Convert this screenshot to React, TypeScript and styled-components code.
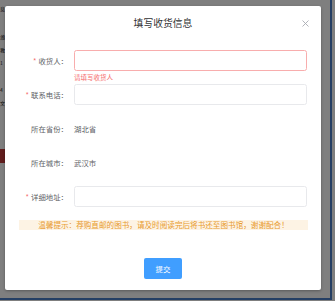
import React from "react";
import styled, { createGlobalStyle } from "styled-components";

const GlobalStyle = createGlobalStyle`
  html, body { margin: 0; padding: 0; }
  body {
    width: 335px;
    height: 301px;
    overflow: hidden;
    font-family: "Noto Sans CJK SC", "Noto Sans", sans-serif;
    background: #fff;
  }
`;

const Page = styled.div`
  position: relative;
  width: 335px;
  height: 301px;
  background: #fff;
  overflow: hidden;
`;

const BehindFrame = styled.div`
  box-sizing: border-box;
  width: 332px;
  height: 300px;
  border-right: 2px solid #4a7fc8;
  border-bottom: 2px solid #4a7fc8;
  display: flex;
  flex-direction: column;
  padding-top: 5px;
`;

const BehindLine = styled.div<{ $top: number }>`
  margin-top: ${(p) => p.$top}px;
  font-size: 5px;
  line-height: 8px;
  color: #222;
  white-space: nowrap;
`;

const BehindRed = styled.div`
  margin-top: 42px;
  width: 6px;
  height: 14px;
  background: #c23a3a;
`;

const Overlay = styled.div`
  position: absolute;
  inset: 0;
  background: rgba(0, 0, 0, 0.5);
  box-sizing: border-box;
  padding: 6px 14px 11px 5px;
  display: flex;
`;

const Modal = styled.div`
  position: relative;
  width: 316px;
  height: 284px;
  background: #fff;
  border-radius: 2px;
  box-shadow: 0 1px 3px rgba(0, 0, 0, 0.3);
  display: flex;
  flex-direction: column;
`;

const Header = styled.div`
  padding: 11px 10px 0;
  height: 13px;
`;

const Title = styled.div`
  text-align: center;
  font-size: 9.8px;
  line-height: 13px;
  color: #303133;
`;

const Close = styled.div`
  position: absolute;
  right: 12px;
  top: 14px;
  width: 7px;
  height: 7px;
  display: flex;
`;

const Body = styled.div`
  padding: 20px 14px 0 0;
  display: flex;
  flex-direction: column;
`;

const Row = styled.div`
  display: flex;
  align-items: center;
  height: 21px;
  margin-bottom: 13px;
`;

const Label = styled.div`
  box-sizing: border-box;
  width: 69px;
  padding-right: 6px;
  text-align: right;
  font-size: 7.4px;
  color: #606266;
  white-space: nowrap;
`;

const Star = styled.span`
  color: #f56c6c;
  margin-right: 2px;
`;

const Field = styled.div`
  position: relative;
  flex: 1;
  height: 21px;
  display: flex;
  align-items: center;
`;

const Input = styled.div<{ $error?: boolean }>`
  box-sizing: border-box;
  width: 100%;
  height: 21px;
  border: 1px solid ${(p) => (p.$error ? "#f8adad" : "#e8e9ec")};
  border-radius: 2.5px;
  background: #fff;
`;

const ErrorText = styled.div`
  position: absolute;
  left: 0;
  top: 100%;
  padding-top: 2.5px;
  font-size: 6.5px;
  line-height: 7px;
  color: #f56c6c;
  white-space: nowrap;
`;

const Value = styled.div`
  font-size: 7.4px;
  color: #606266;
`;

const Notice = styled.div`
  margin: 0 0 0 14px;
  height: 10px;
  width: 289px;
  background: #fdf3e4;
  color: #e89a2c;
  font-size: 7.6px;
  line-height: 10px;
  text-align: center;
  white-space: nowrap;
`;

const Footer = styled.div`
  display: flex;
  justify-content: center;
  padding-top: 28px;
`;

const SubmitButton = styled.button`
  width: 38px;
  height: 21px;
  border: none;
  border-radius: 2px;
  background: #409eff;
  color: #fff;
  font-family: "Noto Sans CJK SC", "Noto Sans", sans-serif;
  font-size: 7.4px;
  padding: 0;
`;

export default function App() {
  return (
    <>
      <GlobalStyle />
      <Page>
        <BehindFrame>
          <BehindLine $top={0}>息</BehindLine>
          <BehindLine $top={20}>瀚</BehindLine>
          <BehindLine $top={5}>教</BehindLine>
          <BehindLine $top={5}>1</BehindLine>
          <BehindLine $top={19}>4</BehindLine>
          <BehindLine $top={5}>文</BehindLine>
          <BehindRed />
        </BehindFrame>
        <Overlay>
          <Modal>
            <Header>
              <Title>填写收货信息</Title>
            </Header>
            <Close>
              <svg width="7" height="7" viewBox="0 0 7 7">
                <path d="M0.5 0.5 L6.5 6.5 M6.5 0.5 L0.5 6.5" stroke="#a8abb2" strokeWidth="0.9" />
              </svg>
            </Close>
            <Body>
              <Row>
                <Label>
                  <Star>*</Star>收货人：
                </Label>
                <Field>
                  <Input $error />
                  <ErrorText>请填写收货人</ErrorText>
                </Field>
              </Row>
              <Row>
                <Label>
                  <Star>*</Star>联系电话：
                </Label>
                <Field>
                  <Input />
                </Field>
              </Row>
              <Row>
                <Label>所在省份：</Label>
                <Field>
                  <Value>湖北省</Value>
                </Field>
              </Row>
              <Row>
                <Label>所在城市：</Label>
                <Field>
                  <Value>武汉市</Value>
                </Field>
              </Row>
              <Row>
                <Label>
                  <Star>*</Star>详细地址：
                </Label>
                <Field>
                  <Input />
                </Field>
              </Row>
            </Body>
            <Notice>温馨提示：荐购直邮的图书，请及时阅读完后将书还至图书馆，谢谢配合！</Notice>
            <Footer>
              <SubmitButton>提交</SubmitButton>
            </Footer>
          </Modal>
        </Overlay>
      </Page>
    </>
  );
}
